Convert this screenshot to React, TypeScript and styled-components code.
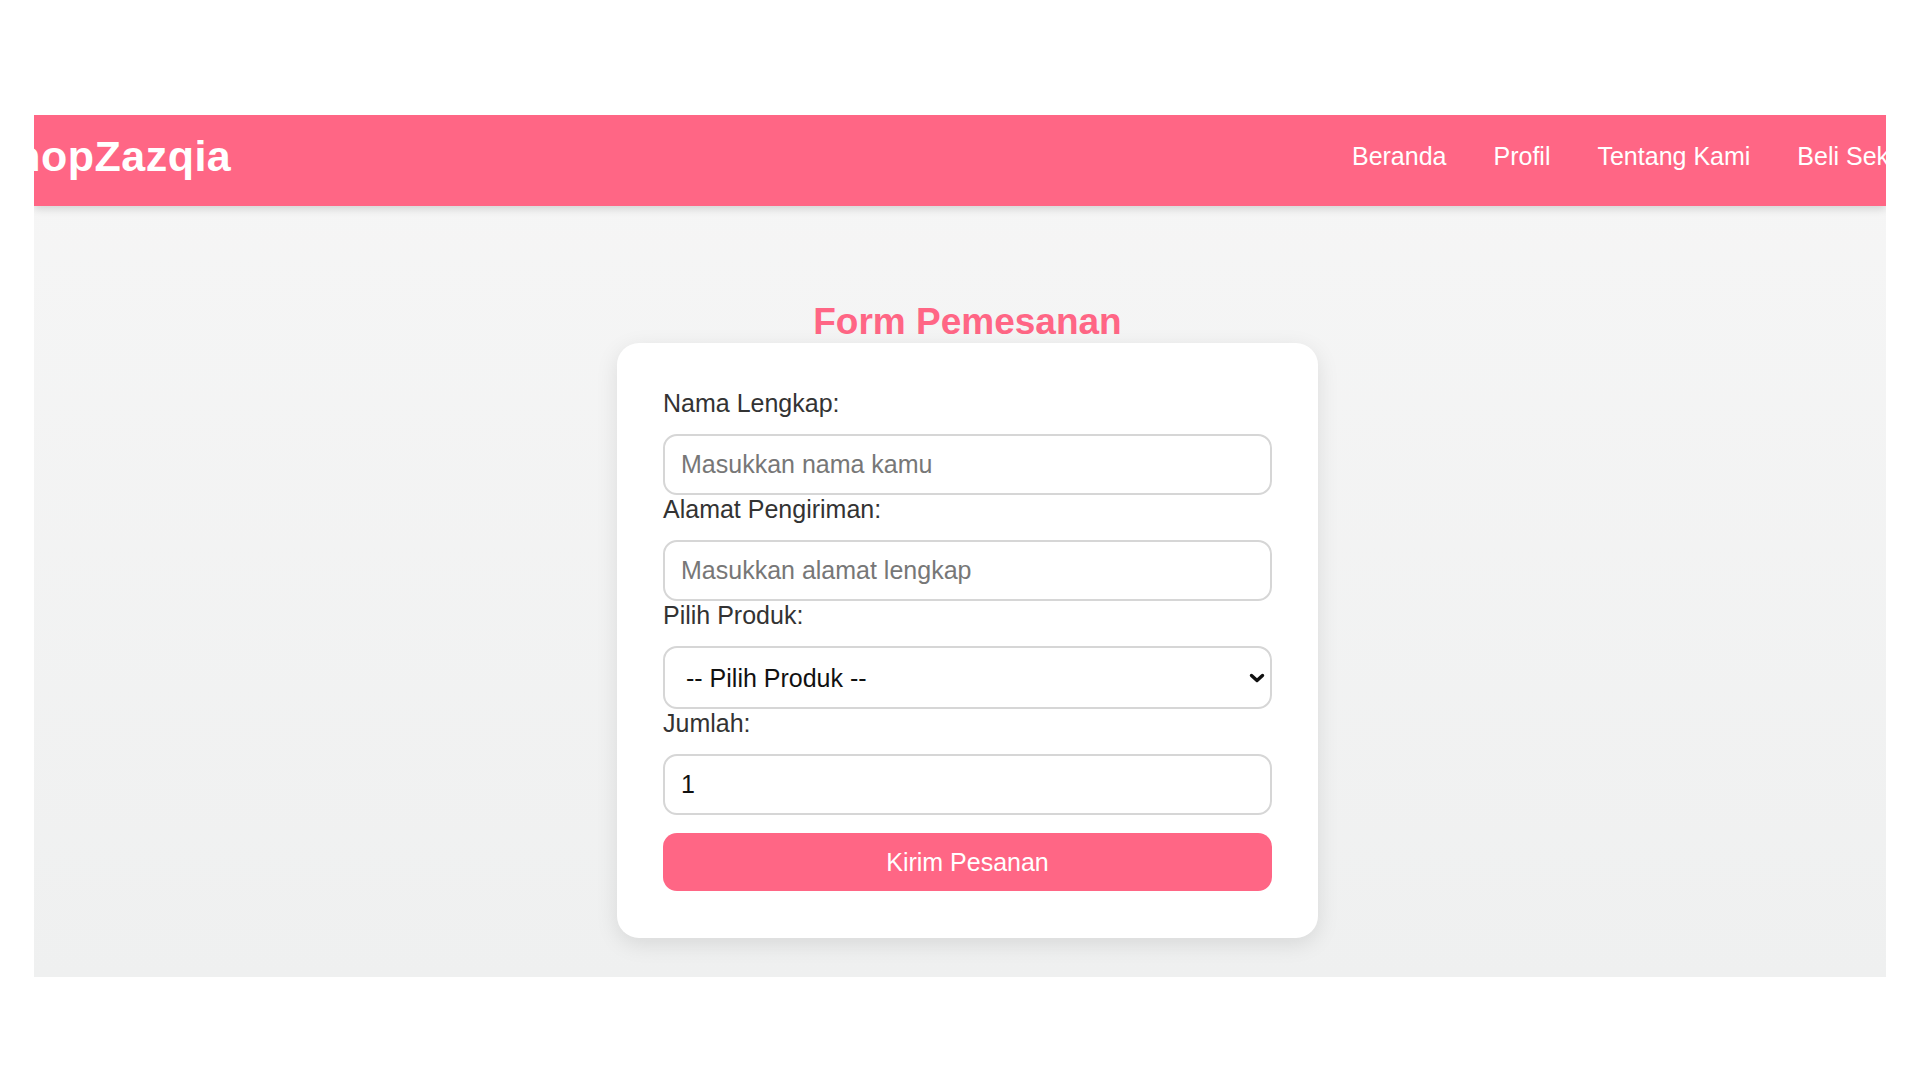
import React from 'react';
import styled, {createGlobalStyle} from "styled-components";

const GlobalStyle = createGlobalStyle`
  * {
    box-sizing: border-box;
  }

  body {
    margin: 0;
    background: #ffffff;
    font-family: "Liberation Sans", Arial, sans-serif;
  }
`

const pink = "#ff6685";

export default function App() {
    return (
        <>
            <GlobalStyle/>
            <Frame>
                <Header>
                    <HeaderInner>
                        <Logo>ShopZazqia</Logo>
                        <NavList>
                            <NavItem><NavLink href="#">Beranda</NavLink></NavItem>
                            <NavItem><NavLink href="#">Profil</NavLink></NavItem>
                            <NavItem><NavLink href="#">Tentang Kami</NavLink></NavItem>
                            <NavItem><NavLink href="#">Beli Sekarang</NavLink></NavItem>
                        </NavList>
                    </HeaderInner>
                </Header>

                <Main>
                    <Title>Form Pemesanan</Title>
                    <Card onSubmit={(e) => e.preventDefault()}>
                        <Label htmlFor="nama">Nama Lengkap:</Label>
                        <Input id="nama" type="text" placeholder="Masukkan nama kamu"/>

                        <Label htmlFor="alamat">Alamat Pengiriman:</Label>
                        <Input id="alamat" type="text" placeholder="Masukkan alamat lengkap"/>

                        <Label htmlFor="produk">Pilih Produk:</Label>
                        <SelectWrap>
                            <Select id="produk" defaultValue="">
                                <option value="">-- Pilih Produk --</option>
                                <option value="a">Produk A</option>
                                <option value="b">Produk B</option>
                            </Select>
                            <Chevron width="16" height="10" viewBox="0 0 16 10">
                                <path d="M2.5 2.5 L8 7.5 L13.5 2.5" fill="none" stroke="#111" strokeWidth="3.4"
                                      strokeLinecap="round" strokeLinejoin="round"/>
                            </Chevron>
                        </SelectWrap>

                        <Label htmlFor="jumlah">Jumlah:</Label>
                        <Input id="jumlah" type="number" defaultValue={1} min={1}/>

                        <SubmitButton type="submit">Kirim Pesanan</SubmitButton>
                    </Card>
                </Main>
            </Frame>
        </>
    );
}

const Frame = styled.div`
  margin: 115px 0 0 34px;
  width: 1852px;
  height: 862px;
  overflow: hidden;
  background: linear-gradient(180deg, #f6f6f6 0%, #eff0f0 100%);
  display: flex;
  flex-direction: column;
`

const Header = styled.header`
  flex: 0 0 91px;
  background-color: ${pink};
  box-shadow: 0 3px 8px rgba(0, 0, 0, 0.14);
  position: relative;
  z-index: 1;
`

const HeaderInner = styled.div`
  height: 100%;
  display: flex;
  align-items: center;
  justify-content: space-between;
  margin: -4px -67px 0 -49px;
`

const Logo = styled.div`
  color: #ffffff;
  font-size: 43px;
  font-weight: 700;
  letter-spacing: 0.5px;
  white-space: nowrap;
`

const NavList = styled.ul`
  display: flex;
  gap: 47px;
  margin: 0;
  padding: 0;
  list-style: none;
`

const NavItem = styled.li`
  white-space: nowrap;
`

const NavLink = styled.a`
  color: #ffffff;
  font-size: 25px;
  text-decoration: none;
`

const Main = styled.main`
  flex: 1;
  display: flex;
  flex-direction: column;
  align-items: center;
  padding: 94px 0 0 15px;
`

const Title = styled.h2`
  margin: 0;
  color: ${pink};
  font-size: 37px;
  font-weight: 700;
  line-height: 43px;
`

const Card = styled.form`
  width: 701px;
  padding: 46px 46px 47px;
  background: #ffffff;
  border-radius: 22px;
  box-shadow: 0 6px 22px rgba(0, 0, 0, 0.1);
  display: flex;
  flex-direction: column;
`

const Label = styled.label`
  display: block;
  color: #333333;
  font-size: 25px;
  line-height: 28px;
`

const fieldBase = `
  display: block;
  width: 100%;
  margin: 17px 0 0;
  border: 2px solid #d6d6d6;
  border-radius: 14px;
  background: #ffffff;
  color: #111111;
  font-family: "Liberation Sans", Arial, sans-serif;
  font-size: 25px;
  outline: none;
`

const Input = styled.input`
  ${fieldBase};
  height: 61px;
  padding: 0 16px;

  &::placeholder {
    color: #777777;
  }

  &::-webkit-inner-spin-button,
  &::-webkit-outer-spin-button {
    opacity: 0;
  }
`

const SelectWrap = styled.div`
  position: relative;
  margin-top: 17px;
`

const Select = styled.select`
  ${fieldBase};
  margin: 0;
  height: 63px;
  padding: 0 40px 0 21px;
  appearance: none;
  -webkit-appearance: none;
`

const Chevron = styled.svg`
  position: absolute;
  right: 7px;
  top: 27px;
  pointer-events: none;
`

const SubmitButton = styled.button`
  margin-top: 18px;
  height: 58px;
  width: 100%;
  border: none;
  border-radius: 14px;
  background-color: ${pink};
  color: #ffffff;
  font-family: "Liberation Sans", Arial, sans-serif;
  font-size: 25px;
  cursor: pointer;
`
